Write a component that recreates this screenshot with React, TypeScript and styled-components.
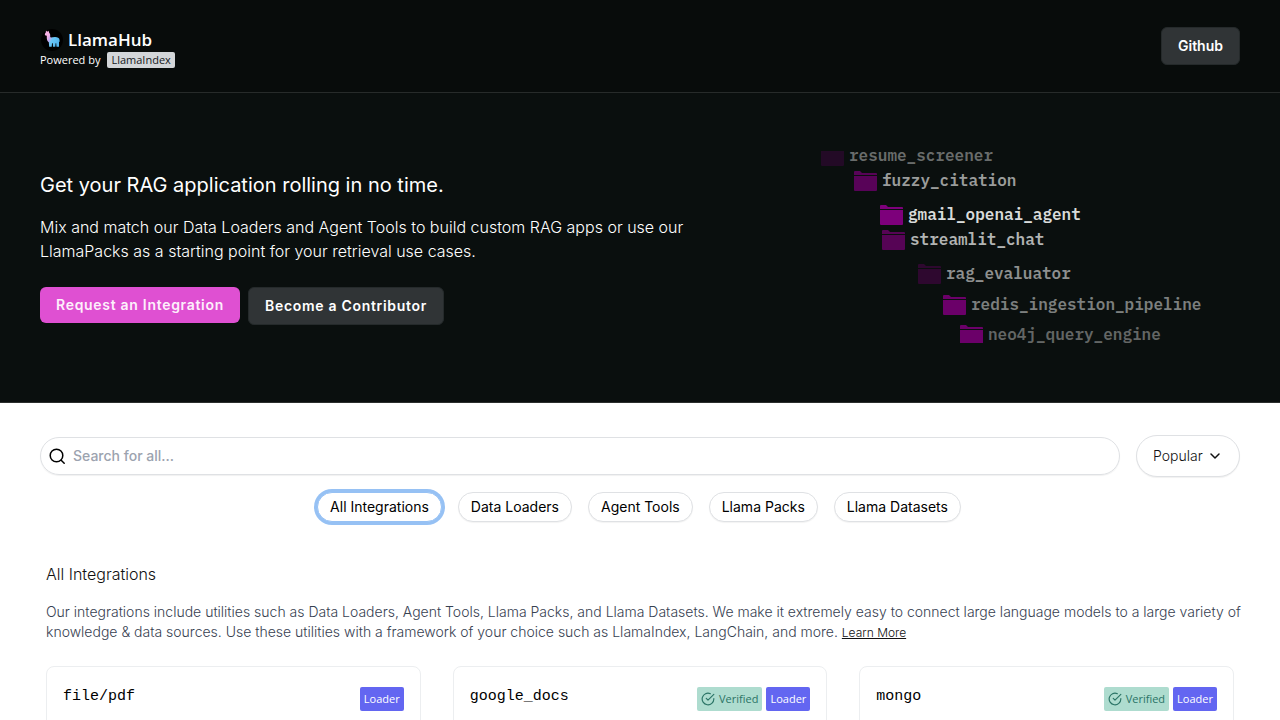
import React from "react";
import styled, { createGlobalStyle } from "styled-components";

const GlobalStyle = createGlobalStyle`
  *, *::before, *::after { box-sizing: border-box; }
  body {
    margin: 0;
    background: #ffffff;
    color: #111111;
    font-family: Inter, "Liberation Sans", sans-serif;
    font-size: 14px;
    line-height: 20px;
  }
  button, input, select { font: inherit; color: inherit; margin: 0; }
  h1, h2, h3, p, ul { margin: 0; padding: 0; font-weight: 400; }
  ul { list-style: none; }
`;

const TopBar = styled.header`
  display: flex;
  align-items: center;
  justify-content: space-between;
  min-height: 93px;
  padding: 0 40px;
  background: #080c0b;
  border-bottom: 1px solid #272b2a;
  color: #ffffff;
`;

const Brand = styled.div`
  display: flex;
  flex-direction: column;
  padding-top: 4px;
  font-family: "Open Sans", "Noto Sans", sans-serif;
`;

const BrandName = styled.a`
  display: flex;
  align-items: center;
  gap: 4px;
  color: #ffffff;
  font-size: 17px;
  font-weight: 600;
  line-height: 24px;
  text-decoration: none;
`;

const Powered = styled.div`
  display: flex;
  align-items: center;
  gap: 7px;
  font-size: 11px;
  line-height: 16px;
`;

const PoweredLink = styled.a`
  padding: 0 4px;
  border-radius: 2px;
  background: #d3d6d9;
  color: #16191b;
  font-weight: 500;
  text-decoration: none;
`;

const ActionButton = styled.button<{ $tone: "pink" | "grey"; $spaced?: boolean }>`
  height: ${(p) => (p.$tone === "pink" ? 36 : 38)}px;
  padding: 0 16px;
  border: ${(p) => (p.$tone === "pink" ? "0" : "1px solid #252a2b")};
  border-radius: 6px;
  background: ${(p) => (p.$tone === "pink" ? "#df50d2" : "#303436")};
  color: ${(p) => (p.$tone === "pink" ? "#fdeffb" : "#ffffff")};
  font-size: 14px;
  font-weight: 600;
  letter-spacing: ${(p) => (p.$spaced ? "0.05em" : "normal")};
  cursor: pointer;
`;

const Hero = styled.section`
  display: flex;
  align-items: center;
  justify-content: space-between;
  min-height: 310px;
  padding: 0 40px;
  background: #0a0f0e;
  border-bottom: 1px solid #2b2e2d;
  color: #ffffff;
`;

const Pitch = styled.div`
  flex: 0 1 680px;
`;

const Headline = styled.h1`
  font-size: 20px;
  line-height: 28px;
`;

const Lead = styled.p`
  margin-top: 16px;
  font-size: 16px;
  font-weight: 300;
  line-height: 24px;
`;

const Actions = styled.div`
  display: flex;
  align-items: flex-start;
  gap: 8px;
  margin-top: 24px;
`;

const FolderList = styled.ul`
  flex: 0 0 419px;
  height: 193px;
  margin-bottom: 2px;
  overflow: hidden;
`;

const FolderRow = styled.li<{ $indent: number; $gap: number; $ink: string }>`
  display: flex;
  align-items: center;
  gap: 5px;
  height: 24px;
  margin-top: ${(p) => p.$gap}px;
  padding-left: ${(p) => p.$indent}px;
  color: ${(p) => p.$ink};
  font-family: "IBM Plex Mono", "Liberation Mono", monospace;
  font-size: 16px;
  font-weight: 600;
  white-space: nowrap;
`;

const FolderName = styled.span`
  padding-bottom: 2px;
`;

const Catalogue = styled.main`
  padding: 32px 0 40px;
`;

const SearchRow = styled.div`
  display: flex;
  align-items: center;
  gap: 16px;
  padding: 0 40px;
`;

const SearchBox = styled.label`
  display: flex;
  flex: 1;
  align-items: center;
  gap: 7px;
  height: 38px;
  padding: 0 8px;
  border: 1px solid #dfe1e4;
  border-radius: 19px;
  box-shadow: 0 1px 1px rgba(0, 0, 0, 0.06);
`;

const SearchInput = styled.input`
  flex: 1;
  padding: 0;
  border: 0;
  outline: 0;
  background: transparent;
  font-weight: 500;
  &::placeholder { color: #9ca3af; opacity: 1; }
`;

const SortBox = styled.label`
  display: grid;
  align-items: center;
  > * { grid-area: 1 / 1; }
  > svg { justify-self: end; margin-right: 17px; pointer-events: none; }
`;

const SortSelect = styled.select`
  appearance: none;
  width: 104px;
  height: 42px;
  padding: 0 32px 0 16px;
  border: 1px solid #dfe1e4;
  border-radius: 21px;
  background: #ffffff;
  box-shadow: 0 1px 1px rgba(0, 0, 0, 0.06);
  font-weight: 300;
`;

const Tabs = styled.nav`
  display: flex;
  justify-content: center;
  gap: 16px;
  margin-top: 15px;
  padding: 0 42px 0 40px;
`;

const Tab = styled.button<{ $active: boolean }>`
  height: 30px;
  padding: 0 12px;
  border: 1px solid ${(p) => (p.$active ? "#96c1f4" : "#dfe1e4")};
  border-radius: 15px;
  background: #ffffff;
  box-shadow: ${(p) => (p.$active ? "0 0 0 3px #96c1f4" : "0 1px 1px rgba(0, 0, 0, 0.05)")};
  color: #000000;
  cursor: pointer;
`;

const Intro = styled.div`
  padding: 40px 24px 0 46px;
`;

const IntroTitle = styled.h2`
  font-size: 16px;
  font-weight: 300;
  line-height: 24px;
`;

const IntroText = styled.p`
  margin-top: 16px;
  color: #374151;
  font-weight: 300;
`;

const LearnMore = styled.a`
  color: #111111;
  font-size: 12px;
`;

const CardGrid = styled.div`
  display: grid;
  grid-template-columns: repeat(3, 1fr);
  gap: 32px;
  padding: 23px 46px 0;
`;

const Card = styled.article`
  display: flex;
  align-items: flex-start;
  justify-content: space-between;
  min-height: 120px;
  padding: 16px;
  border: 1px solid #eceef0;
  border-radius: 8px;
`;

const CardTitle = styled.h3`
  color: #000000;
  font-family: "Liberation Mono", monospace;
  font-size: 15px;
  line-height: 28px;
`;

const Badges = styled.div`
  display: flex;
  gap: 4px;
  padding-top: 4px;
`;

const Badge = styled.span<{ $kind: "verified" | "loader" }>`
  display: flex;
  align-items: center;
  gap: 4px;
  height: 24px;
  padding: 0 4px;
  border-radius: 2px;
  background: ${(p) => (p.$kind === "verified" ? "#aedccf" : "#6366f1")};
  color: ${(p) => (p.$kind === "verified" ? "#2b7466" : "#ffffff")};
  font-family: "Open Sans", "Noto Sans", sans-serif;
  font-size: 11px;
`;

const LlamaLogo = () => (
  <svg width="24" height="24" viewBox="0 0 24 24" aria-hidden="true">
    <defs>
      <linearGradient id="llama" x1="5" y1="6" x2="19" y2="14" gradientUnits="userSpaceOnUse">
        <stop offset="0.2" stopColor="#f9b2e6" />
        <stop offset="0.4" stopColor="#c3a8ee" />
        <stop offset="0.55" stopColor="#6cc8f6" />
        <stop offset="1" stopColor="#52b6f0" />
      </linearGradient>
    </defs>
    <circle cx="12" cy="12" r="11" fill="#000000" />
    <path
      fill="url(#llama)"
      d="M6 2.600L7.200 3.800L8.500 2.800L9.300 5C10 5.600 10.200 6.500 10.200 7.500V9.300C11.600 9.700 13 9 15 9C17.600 9 19.300 9.900 19.500 11.800L19.700 13.600L19 13.900V18.800H16.500L16.200 15.300H15.600L15.300 18.800H13L12.800 15.300H12L11.700 18.800H9.200L8.800 14.200C7.500 13.400 6.800 11.900 6.800 10.100V7.700L5 7.200C4.700 6.200 5 5.200 5.700 4.700Z"
    />
  </svg>
);

const FolderIcon = ({ fill }: { fill: string }) => (
  <svg width="23" height="20" viewBox="0 0 23 20" aria-hidden="true">
    <path fill={fill} d="M0 1a1 1 0 0 1 1-1h5l2 2h14a1 1 0 0 1 1 1v1H0zM0 5h23v14a1 1 0 0 1-1 1H1a1 1 0 0 1-1-1z" />
  </svg>
);

const SearchIcon = () => (
  <svg width="17" height="17" viewBox="0 0 17 17" fill="none" stroke="#000000" strokeWidth="1.500" strokeLinecap="round" aria-hidden="true">
    <circle cx="7.500" cy="7.500" r="6.300" />
    <path d="M12.200 12.200l3 3" />
  </svg>
);

const ChevronIcon = () => (
  <svg width="16" height="16" viewBox="0 0 16 16" fill="none" stroke="#111111" strokeWidth="1.500" strokeLinecap="round" strokeLinejoin="round" aria-hidden="true">
    <path d="M4 6l4 4 4-4" />
  </svg>
);

const CheckIcon = () => (
  <svg width="14" height="14" viewBox="0 0 24 24" fill="none" stroke="currentColor" strokeWidth="2" strokeLinecap="round" strokeLinejoin="round" aria-hidden="true">
    <path d="M22 11.080V12a10 10 0 1 1-5.930-9.140" />
    <path d="M22 4L12 14.010l-3-3" />
  </svg>
);

const folders = [
  { name: "resume_screener", indent: 0, gap: -6, fill: "#230a26", ink: "#696c6b" },
  { name: "fuzzy_citation", indent: 33, gap: 1, fill: "#580358", ink: "#9a9c9b" },
  { name: "gmail_openai_agent", indent: 59, gap: 10, fill: "#7d007b", ink: "#d9dbda" },
  { name: "streamlit_chat", indent: 61, gap: 1, fill: "#560455", ink: "#b2b4b3" },
  { name: "rag_evaluator", indent: 97, gap: 10, fill: "#2e082f", ink: "#8e908f" },
  { name: "redis_ingestion_pipeline", indent: 122, gap: 7, fill: "#6b0069", ink: "#7c7f7e" },
  { name: "neo4j_query_engine", indent: 139, gap: 6, fill: "#6b0069", ink: "#636665" },
];

const tabs = ["All Integrations", "Data Loaders", "Agent Tools", "Llama Packs", "Llama Datasets"];

const cards = [
  { name: "file/pdf", verified: false },
  { name: "google_docs", verified: true },
  { name: "mongo", verified: true },
];

export default function App() {
  const [active, setActive] = React.useState(tabs[0]);

  return (
    <>
      <GlobalStyle />
      <TopBar>
        <Brand>
          <BrandName href="#">
            <LlamaLogo />
            LlamaHub
          </BrandName>
          <Powered>
            Powered by
            <PoweredLink href="#">LlamaIndex</PoweredLink>
          </Powered>
        </Brand>
        <ActionButton $tone="grey">Github</ActionButton>
      </TopBar>
      <Hero>
        <Pitch>
          <Headline>Get your RAG application rolling in no time.</Headline>
          <Lead>
            Mix and match our Data Loaders and Agent Tools to build custom RAG apps or use our LlamaPacks as a starting
            point for your retrieval use cases.
          </Lead>
          <Actions>
            <ActionButton $tone="pink" $spaced>Request an Integration</ActionButton>
            <ActionButton $tone="grey" $spaced>Become a Contributor</ActionButton>
          </Actions>
        </Pitch>
        <FolderList>
          {folders.map((f) => (
            <FolderRow key={f.name} $indent={f.indent} $gap={f.gap} $ink={f.ink}>
              <FolderIcon fill={f.fill} />
              <FolderName>{f.name}</FolderName>
            </FolderRow>
          ))}
        </FolderList>
      </Hero>
      <Catalogue>
        <SearchRow>
          <SearchBox>
            <SearchIcon />
            <SearchInput type="text" placeholder="Search for all..." aria-label="Search" />
          </SearchBox>
          <SortBox>
            <SortSelect aria-label="Sort by" defaultValue="Popular">
              <option>Popular</option>
            </SortSelect>
            <ChevronIcon />
          </SortBox>
        </SearchRow>
        <Tabs>
          {tabs.map((t) => (
            <Tab key={t} type="button" $active={t === active} onClick={() => setActive(t)}>
              {t}
            </Tab>
          ))}
        </Tabs>
        <Intro>
          <IntroTitle>All Integrations</IntroTitle>
          <IntroText>
            Our integrations include utilities such as Data Loaders, Agent Tools, Llama Packs, and Llama Datasets. We
            make it extremely easy to connect large language models to a large variety of knowledge &amp; data sources.
            Use these utilities with a framework of your choice such as LlamaIndex, LangChain, and more.{" "}
            <LearnMore href="#">Learn More</LearnMore>
          </IntroText>
        </Intro>
        <CardGrid>
          {cards.map((c) => (
            <Card key={c.name}>
              <CardTitle>{c.name}</CardTitle>
              <Badges>
                {c.verified && (
                  <Badge $kind="verified">
                    <CheckIcon />
                    Verified
                  </Badge>
                )}
                <Badge $kind="loader">Loader</Badge>
              </Badges>
            </Card>
          ))}
        </CardGrid>
      </Catalogue>
    </>
  );
}
